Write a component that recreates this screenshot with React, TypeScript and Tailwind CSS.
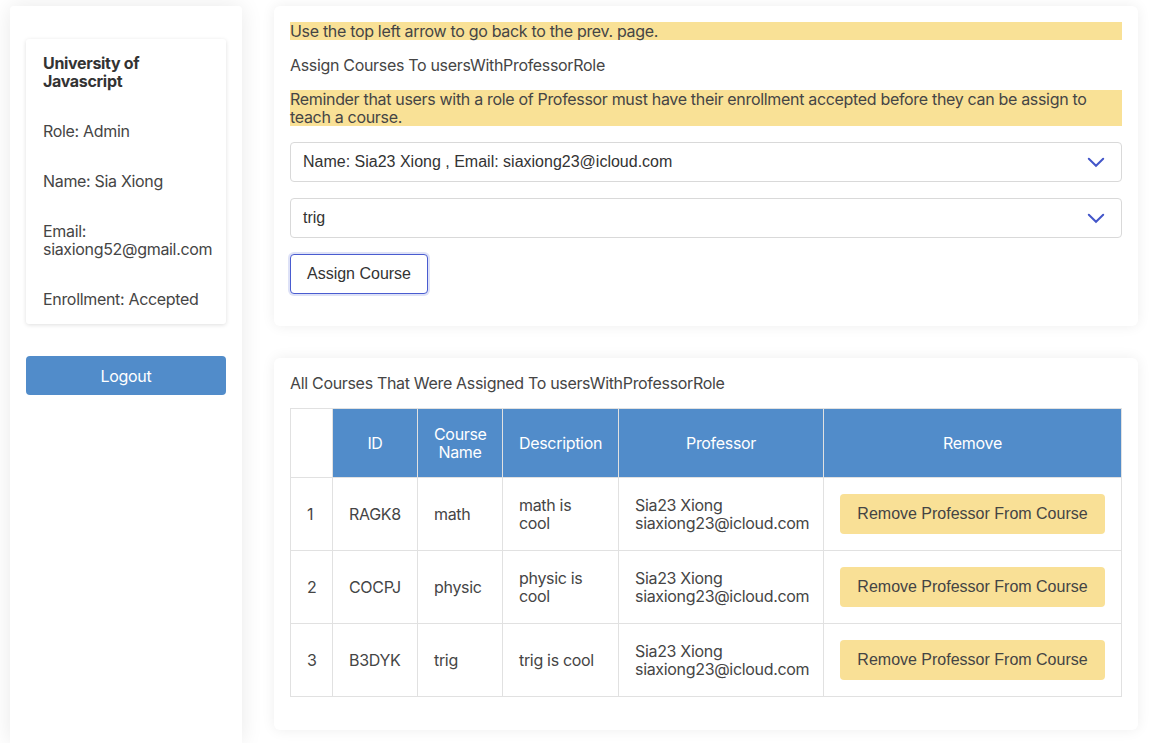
import React from 'react';

const courses = [
    { id: 'RAGK8', name: 'math', description: 'math is cool' },
    { id: 'COCPJ', name: 'physic', description: 'physic is cool' },
    { id: 'B3DYK', name: 'trig', description: 'trig is cool' },
];

const Chevron: React.FC = () => (
    <svg width="18" height="11" viewBox="0 0 18 11" fill="none">
        <path d="M1.8 1.8 L9 8.8 L16.2 1.8" stroke="#4356c9" strokeWidth="2" strokeLinecap="round" />
    </svg>
);

const FakeSelect: React.FC<{ value: string }> = ({ value }) => (
    <div className="flex h-10 items-center justify-between rounded-[4px] border border-[#d9d9d9] bg-white pl-3 pr-4 font-['Liberation_Sans',Arial,sans-serif] text-base tracking-normal text-[#333]">
        <span>{value}</span>
        <Chevron />
    </div>
);

const App: React.FC = () => {
    return (
        <div className="flex h-[743px] gap-8 overflow-hidden bg-white pl-[10px] pt-[6px] font-['Inter',sans-serif] text-base leading-[18px] tracking-[-0.02em] text-[#454545]">
            {/* sidebar */}
            <aside className="flex h-[737px] w-[232px] shrink-0 flex-col gap-8 rounded-t-[4px] bg-white px-4 pt-[33px] shadow-[0_0_22px_rgba(0,0,0,0.09)]">
                <div className="flex flex-col gap-8 rounded-[3px] bg-white px-[17px] pt-[15px] pb-4 shadow-[0_1px_4px_rgba(0,0,0,0.13)]">
                    <p className="font-bold text-[#333]">University of Javascript</p>
                    <p>Role: Admin</p>
                    <p>Name: Sia Xiong</p>
                    <p>Email: siaxiong52@gmail.com</p>
                    <p>Enrollment: Accepted</p>
                </div>
                <button className="h-[39px] w-full rounded-[4px] bg-[#518cca] text-base text-white">Logout</button>
            </aside>

            {/* main */}
            <main className="flex w-[864px] shrink-0 flex-col gap-8">
                <section className="flex flex-col gap-4 rounded-[6px] bg-white px-4 pt-4 pb-8 shadow-[0_0_14px_rgba(0,0,0,0.07)]">
                    <p className="bg-[#f9e196]">Use the top left arrow to go back to the prev. page.</p>
                    <p>Assign Courses To usersWithProfessorRole</p>
                    <p className="bg-[#f9e196]">
                        Reminder that users with a role of Professor must have their enrollment accepted before they can be assign to teach a course.
                    </p>
                    <FakeSelect value="Name: Sia23 Xiong , Email: siaxiong23@icloud.com" />
                    <FakeSelect value="trig" />
                    <div>
                        <button className="h-10 w-[138px] rounded-[4px] border border-[#4a5cd0] bg-white font-['Liberation_Sans',Arial,sans-serif] text-base tracking-normal text-[#333] shadow-[0_0_0_2px_rgba(74,92,208,0.18)]">
                            Assign Course
                        </button>
                    </div>
                </section>

                <section className="flex flex-col gap-4 rounded-[6px] bg-white px-4 pt-4 pb-[33px] shadow-[0_0_14px_rgba(0,0,0,0.07)]">
                    <p>All Courses That Were Assigned To usersWithProfessorRole</p>
                    <table className="w-full table-fixed border-collapse border border-[#e1e1e1]">
                        <colgroup>
                            <col className="w-[42px]" />
                            <col className="w-[85px]" />
                            <col className="w-[85px]" />
                            <col className="w-[116px]" />
                            <col className="w-[205px]" />
                            <col />
                        </colgroup>
                        <thead>
                            <tr className="text-white">
                                <th className="border border-[#e1e1e1] bg-white"></th>
                                <th className="border border-[#e1e1e1] bg-[#518cca] px-4 py-4 font-normal">ID</th>
                                <th className="border border-[#e1e1e1] bg-[#518cca] px-4 py-4 font-normal">Course Name</th>
                                <th className="border border-[#e1e1e1] bg-[#518cca] px-4 py-4 font-normal">Description</th>
                                <th className="border border-[#e1e1e1] bg-[#518cca] px-4 py-4 font-normal">Professor</th>
                                <th className="border border-[#e1e1e1] bg-[#518cca] px-4 py-4 font-normal">Remove</th>
                            </tr>
                        </thead>
                        <tbody>
                            {courses.map((c, i) => (
                                <tr key={c.id}>
                                    <td className="border border-[#e1e1e1] px-4 py-4">{i + 1}</td>
                                    <td className="border border-[#e1e1e1] px-4 py-4">{c.id}</td>
                                    <td className="border border-[#e1e1e1] px-4 py-4">{c.name}</td>
                                    <td className="border border-[#e1e1e1] px-4 py-4">{c.description}</td>
                                    <td className="border border-[#e1e1e1] px-4 py-4">
                                        Sia23 Xiong
                                        <br />
                                        siaxiong23@icloud.com
                                    </td>
                                    <td className="border border-[#e1e1e1] px-4 py-4">
                                        <button className="h-10 w-[265px] rounded-[4px] bg-[#f9e096] font-['Liberation_Sans',Arial,sans-serif] text-base tracking-normal text-[#444]">
                                            Remove Professor From Course
                                        </button>
                                    </td>
                                </tr>
                            ))}
                        </tbody>
                    </table>
                </section>
            </main>
        </div>
    );
};

export default App;
